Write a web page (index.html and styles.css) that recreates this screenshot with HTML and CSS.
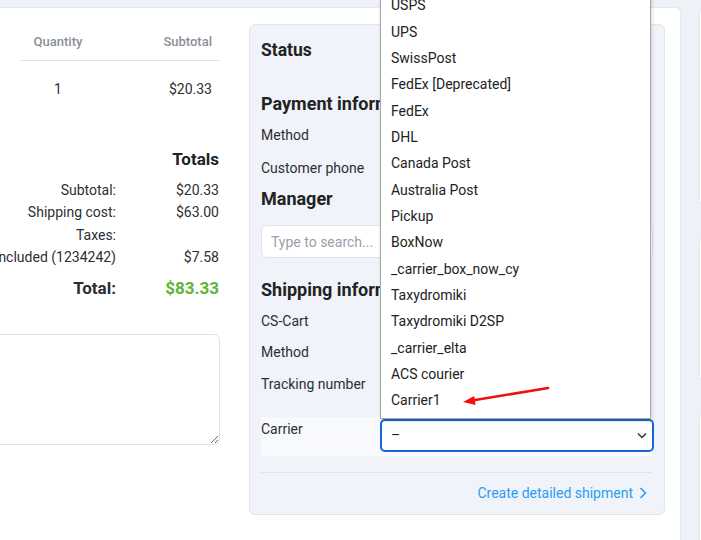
FILE: index.html
```html
<!DOCTYPE html>
<html lang="en">
<head>
    <meta charset="UTF-8">
    <meta name="viewport" content="width=device-width, initial-scale=1.0">
    <title>Order details</title>
    <link rel="stylesheet" href="styles.css">
</head>
<body>
<div class="page">
    <div class="card main-card">
        <!-- Products and totals -->
        <div class="order-col">
            <div class="items-table">
                <div class="th th-product">Product</div>
                <div class="th th-qty">Quantity</div>
                <div class="th th-sub">Subtotal</div>
                <div class="td td-product"></div>
                <div class="td td-qty">1</div>
                <div class="td td-sub">$20.33</div>
            </div>

            <div class="totals">
                <h3 class="totals-title">Totals</h3>
                <div class="totals-grid">
                    <span class="t-label">Subtotal:</span><span class="t-value">$20.33</span>
                    <span class="t-label">Shipping cost:</span><span class="t-value">$63.00</span>
                    <span class="t-label">Taxes:</span><span class="t-value"></span>
                    <span class="t-label">VAT included (1234242)</span><span class="t-value">$7.58</span>
                </div>
                <div class="totals-grid total-row">
                    <span class="t-label">Total:</span><span class="t-value total-value">$83.33</span>
                </div>
            </div>

            <textarea class="notes"></textarea>
        </div>

        <!-- Status sidebar -->
        <div class="status-panel">
            <h3 class="panel-title">Status</h3>

            <h3 class="section-title">Payment information</h3>
            <div class="field"><span class="field-label">Method</span><span></span></div>
            <div class="field"><span class="field-label">Customer phone</span><span></span></div>

            <h3 class="section-title manager-title">Manager</h3>
            <input class="search-input" type="text" placeholder="Type to search...">

            <h3 class="section-title shipping-title">Shipping information</h3>
            <div class="field field-sm"><span class="field-label">CS-Cart</span><span></span></div>
            <div class="field field-sm"><span class="field-label">Method</span><span></span></div>
            <div class="field field-sm"><span class="field-label">Tracking number</span><span></span></div>

            <div class="carrier-row">
                <span class="field-label carrier-label">Carrier</span>
                <div class="select-wrap">
                    <div class="fake-select">
                        <span>–</span>
                        <svg class="chevron" width="10" height="7" viewBox="0 0 10 7"><path d="M1 1.5 L5 5.5 L9 1.5" fill="none" stroke="#333" stroke-width="1.4"/></svg>
                    </div>
                    <ul class="dropdown">
                        <li>USPS</li>
                        <li>UPS</li>
                        <li>SwissPost</li>
                        <li>FedEx [Deprecated]</li>
                        <li>FedEx</li>
                        <li>DHL</li>
                        <li>Canada Post</li>
                        <li>Australia Post</li>
                        <li>Pickup</li>
                        <li>BoxNow</li>
                        <li>_carrier_box_now_cy</li>
                        <li>Taxydromiki</li>
                        <li>Taxydromiki D2SP</li>
                        <li>_carrier_elta</li>
                        <li>ACS courier</li>
                        <li>Carrier1</li>
                        <svg class="red-arrow" width="92" height="24" viewBox="0 0 92 24">
                            <line x1="88" y1="4" x2="12" y2="16.5" stroke="#f01010" stroke-width="2.6" stroke-linecap="round"/>
                            <polygon points="3,18 15.5,21 14.2,12" fill="#f01010"/>
                        </svg>
                    </ul>
                </div>
            </div>

            <div class="panel-footer">
                <a class="detail-link" href="#">Create detailed shipment
                    <svg width="8" height="12" viewBox="0 0 8 12"><path d="M1.5 1 L6.5 6 L1.5 11" fill="none" stroke="#2a9df4" stroke-width="1.6"/></svg>
                </a>
            </div>
        </div>
    </div>

    <div class="side-col">
        <div class="card side-card side-1"></div>
        <div class="card side-card side-2"></div>
        <div class="card side-card side-3"></div>
    </div>
</div>
</body>
</html>
```

FILE: styles.css
```css
html, body {
    overflow: hidden;
}
body {
    margin: 0;
    background: #eef1f7;
    font-family: Roboto, "Liberation Sans", sans-serif;
    font-size: 14px;
    color: #2b2f36;
}
.page {
    display: flex;
    gap: 18px;
    padding-top: 7px;
    margin-left: -200px;
}
.card {
    background: #fff;
    border: 1px solid #e2e7f0;
    border-radius: 6px;
}
.main-card {
    display: flex;
    gap: 29px;
    padding: 16px 15px 40px 15px;
    height: 600px;
    flex-shrink: 0;
}

/* order column */
.order-col {
    width: 404px;
}
.items-table {
    display: grid;
    grid-template-columns: 204px 76px 124px;
}
.th {
    height: 36px;
    line-height: 36px;
    font-size: 13px;
    font-weight: 500;
    color: #8a8f99;
    border-bottom: 1px solid #dfe4ef;
}
.td {
    padding: 20px 0;
    line-height: 16px;
    color: #2b2f36;
}
.th-qty, .td-qty {
    text-align: center;
}
.th-sub, .td-sub {
    text-align: right;
    padding-right: 8px;
}
.th-product {
    visibility: hidden;
}
.totals {
    margin-top: 30px;
}
.totals-title {
    margin: 0 0 8px 0;
    text-align: right;
    font-size: 17px;
    line-height: 24px;
    font-weight: 700;
    padding-right: 1px;
    color: #222;
}
.totals-grid {
    display: grid;
    grid-template-columns: 1fr 104px;
    line-height: 22.3px;
}
.t-label {
    text-align: right;
    white-space: nowrap;
}
.t-value {
    text-align: right;
    padding-right: 1px;
}
.total-row {
    margin-top: 8px;
    font-size: 17px;
    font-weight: 700;
    line-height: 24px;
}
.total-value {
    color: #5cb533;
}
.notes {
    display: block;
    margin-top: 34px;
    width: 404px;
    height: 111px;
    box-sizing: border-box;
    border: 1px solid #dde2ec;
    border-radius: 6px;
    background: #fff;
}

/* status panel */
.status-panel {
    width: 416px;
    height: 491px;
    box-sizing: border-box;
    background: #f0f3f9;
    border: 1px solid #e0e5ee;
    border-radius: 6px;
    padding: 11px 11px 0 11px;
}
.panel-title {
    margin: 0;
    font-size: 17.5px;
    line-height: 28px;
    font-weight: 700;
    color: #222;
}
.section-title {
    margin: 28px 0 2px 0;
    font-size: 18px;
    line-height: 24px;
    font-weight: 700;
    color: #222;
    white-space: nowrap;
}
.manager-title {
    margin-top: 3px;
}
.shipping-title {
    margin-top: 20px;
    margin-bottom: 3px;
}
.field {
    display: grid;
    grid-template-columns: 119px 1fr;
    height: 33px;
    align-items: center;
}
.field-sm {
    height: 31.5px;
}
.field-label {
    color: #2b2f36;
}
.search-input {
    display: block;
    margin-top: 14px;
    width: 100%;
    height: 33px;
    box-sizing: border-box;
    border: 1px solid #dce2ee;
    border-radius: 6px;
    padding: 0 9px;
    font-family: Roboto, "Liberation Sans", sans-serif;
    font-size: 14px;
    background: #fff;
}
.search-input::placeholder {
    color: #9aa0aa;
}
.carrier-row {
    display: grid;
    grid-template-columns: 119px 1fr;
    margin-top: 17px;
    width: 391px;
    height: 39px;
    background: #f8f9fc;
    padding-top: 2px;
    box-sizing: border-box;
}
.carrier-label {
    line-height: 20px;
}
.select-wrap {
    position: relative;
}
.fake-select {
    display: flex;
    align-items: center;
    justify-content: space-between;
    width: 274px;
    height: 33px;
    box-sizing: border-box;
    border: 2px solid #1766d9;
    border-radius: 5px;
    background: #fff;
    padding: 0 5px 0 9px;
    color: #222;
}
.dropdown {
    position: absolute;
    left: 0;
    bottom: 100%;
    width: 271px;
    box-sizing: border-box;
    margin: 0;
    padding: 0 0 4px 0;
    list-style: none;
    background: #fff;
    border: 1px solid #a8a8a8;
    box-shadow: 1px 2px 4px rgba(0, 0, 0, 0.15);
}
.dropdown li {
    height: 26.33px;
    line-height: 26.33px;
    padding-left: 10px;
    color: #222;
    white-space: nowrap;
}
.red-arrow {
    position: absolute;
    left: 79px;
    bottom: 10px;
}
.panel-footer {
    margin-top: 16px;
    width: 391px;
    border-top: 1px solid #dfe4ec;
    padding-top: 11px;
    text-align: right;
}
.detail-link {
    display: inline-flex;
    align-items: center;
    gap: 6px;
    color: #2a9df4;
    text-decoration: none;
    line-height: 18px;
    margin-right: 5px;
}

/* right column */
.side-col {
    display: flex;
    flex-direction: column;
    gap: 30px;
    width: 300px;
    flex-shrink: 0;
}
.side-1 {
    height: 197px;
}
.side-2 {
    height: 144px;
}
.side-3 {
    height: 200px;
}
```
